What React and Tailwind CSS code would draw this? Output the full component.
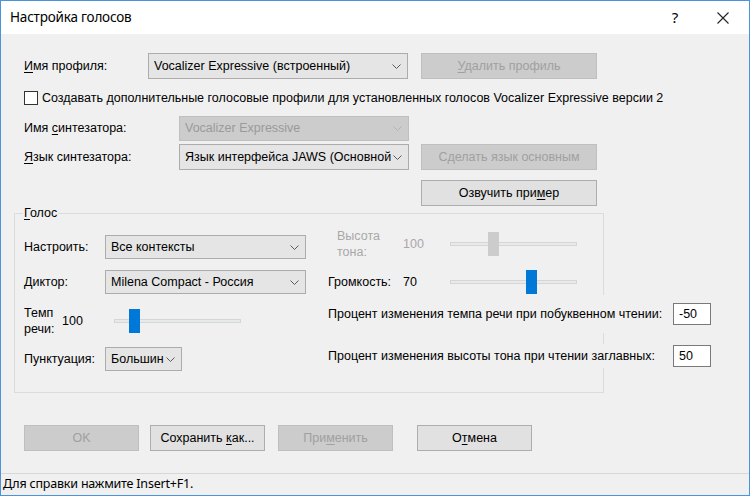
import React from 'react';

// Windows dialog "Настройка голосов" recreated with plain flex layout

const Chevron = ({ disabled }) => (
  <svg width="9" height="5" viewBox="0 0 9 5" className="shrink-0">
    <polyline
      points="0.5,0.5 4.5,4.5 8.5,0.5"
      fill="none"
      stroke={disabled ? '#b4b4b4' : '#5a5a5a'}
      strokeWidth="1"
    />
  </svg>
);

const Combo = ({ text, w, h = 'h-[25px]', disabled }) => (
  <div
    className={`${w} ${h} shrink-0 flex items-center border pl-[5px] pr-[6px] ${
      disabled
        ? 'bg-[#cccccc] border-[#bfbfbf] text-[#9a9a9a]'
        : 'bg-[#e5e5e5] border-[#acacac] text-black'
    }`}
  >
    <span className="flex-1 overflow-hidden whitespace-nowrap">{text}</span>
    <span className="pl-[2px] flex items-center">
      <Chevron disabled={disabled} />
    </span>
  </div>
);

const Button = ({ children, w = 'w-[176px]', disabled }) => (
  <div
    className={`${w} h-[26px] shrink-0 flex items-center justify-center border ${
      disabled
        ? 'bg-[#cccccc] border-[#bfbfbf] text-[#a0a0a0]'
        : 'bg-[#e1e1e1] border-[#adadad] text-black'
    }`}
  >
    <span className="whitespace-pre">{children}</span>
  </div>
);

const Slider = ({ pos, disabled }) => (
  <div className="relative w-[127px] h-[24px] flex items-center">
    <div className="w-full h-[4px] bg-[#e7eaea] border border-[#d6d6d6]" />
    <div
      className={`absolute top-0 w-[11px] h-[24px] ${disabled ? 'bg-[#cccccc]' : 'bg-[#0078d7]'}`}
      style={{ left: pos }}
    />
  </div>
);

const U = ({ children }) => (
  <span className="underline decoration-1 underline-offset-[2px]">{children}</span>
);

export default function App() {
  return (
    <div className="w-[750px] h-[496px] border border-[#4b93dc] bg-[#f0f0f0] flex flex-col overflow-hidden font-['Liberation_Sans',Arial,sans-serif] text-[12.5px] text-black">
      {/* Title bar */}
      <div className="h-[33px] shrink-0 bg-white flex items-center pl-[9px] font-['Noto_Sans',sans-serif]">
        <span className="text-[13.5px] tracking-[-0.2px] flex-1">Настройка голосов</span>
        <span className="text-[15px] w-[20px] text-center mr-[32px]">?</span>
        <span className="mr-[20px] flex items-center">
          <svg width="12" height="12" viewBox="0 0 12 12">
            <path d="M0.5 0.5 L11.5 11.5 M11.5 0.5 L0.5 11.5" stroke="#222" strokeWidth="1.1" />
          </svg>
        </span>
      </div>

      {/* Body */}
      <div className="h-[439px] shrink-0 pl-[23px] flex flex-col">
        <div className="mt-[19px] h-[26px] flex items-center">
          <span className="w-[124px]"><U>И</U>мя профиля:</span>
          <Combo text="Vocalizer Expressive (встроенный)" w="w-[260px]" h="h-[26px]" />
          <span className="ml-[13px]">
            <Button disabled><U>У</U>далить профиль</Button>
          </span>
        </div>

        <div className="mt-[12px] h-[14px] flex items-center">
          <div className="w-[14px] h-[14px] bg-white border border-[#333]" />
          <span className="ml-[4px] whitespace-nowrap">
            Создавать дополнительные голосовые профили для установленных голосов Vocalizer Expressive версии 2
          </span>
        </div>

        <div className="mt-[11px] h-[25px] flex items-center">
          <span className="w-[155px]">Имя <U>с</U>интезатора:</span>
          <Combo text="Vocalizer Expressive" w="w-[230px]" disabled />
        </div>

        <div className="mt-[3px] h-[26px] flex items-center">
          <span className="w-[155px]"><U>Я</U>зык синтезатора:</span>
          <Combo text="Язык интерфейса JAWS (Основной)" w="w-[230px]" h="h-[26px]" />
          <span className="ml-[12px]">
            <Button disabled>Сделать язык основным</Button>
          </span>
        </div>

        <div className="mt-[10px] h-[26px] flex items-center pl-[397px]">
          <Button>Озвучить при<U>м</U>ер</Button>
        </div>

        {/* Group box */}
        <div className="mt-[7px] -ml-[10px] w-[590px] h-[180px] border border-[#dcdcdc] relative pl-[9px] flex">
          <span className="absolute -top-[9px] left-[8px] px-[1px] bg-[#f0f0f0] leading-[16px]">
            <U>Г</U>олос
          </span>

          {/* Left column */}
          <div className="w-[304px] shrink-0 flex flex-col">
            <div className="mt-[21px] h-[24px] flex items-center">
              <span className="w-[81px]">Настроить:</span>
              <Combo text="Все контексты" w="w-[201px]" h="h-[24px]" />
            </div>
            <div className="mt-[11px] h-[24px] flex items-center">
              <span className="w-[81px]">Диктор:</span>
              <Combo text="Milena Compact - Россия" w="w-[201px]" h="h-[24px]" />
            </div>
            <div className="mt-[12px] h-[30px] flex items-center">
              <span className="w-[38px] leading-[16px]">Темп<br />речи:</span>
              <span className="w-[52px]">100</span>
              <Slider pos="15px" />
            </div>
            <div className="mt-[11px] h-[24px] flex items-center">
              <span className="w-[81px]">Пунктуация:</span>
              <Combo text="Большин" w="w-[77px]" h="h-[24px]" />
            </div>
          </div>

          {/* Right column */}
          <div className="shrink-0 flex flex-col">
            <div className="mt-[15px] h-[30px] flex items-center text-[#a8a8a8]">
              <span className="w-[75px] pl-[9px] leading-[16px]">Высота<br />тона:</span>
              <span className="w-[47px]">100</span>
              <Slider pos="38px" disabled />
            </div>
            <div className="mt-[11px] h-[24px] flex items-center">
              <span className="w-[75px]">Громкость:</span>
              <span className="w-[47px]">70</span>
              <Slider pos="76px" />
            </div>
            <div className="mt-[9px] h-[22px] flex items-center">
              <span className="w-[345px] h-[38px] flex items-center bg-[#f0f0f0] whitespace-nowrap">
                Процент изменения темпа речи при побуквенном чтении:
              </span>
              <div className="w-[38px] h-[22px] bg-white border border-[#7a7a7a] flex items-center pl-[5px]">-50</div>
            </div>
            <div className="mt-[20px] h-[22px] flex items-center">
              <span className="w-[345px] h-[24px] flex items-center bg-[#f0f0f0] whitespace-nowrap">
                Процент изменения высоты тона при чтении заглавных:
              </span>
              <div className="w-[38px] h-[22px] bg-white border border-[#7a7a7a] flex items-center pl-[5px]">50</div>
            </div>
          </div>
        </div>

        {/* Dialog buttons */}
        <div className="mt-[32px] h-[26px] flex items-center">
          <Button w="w-[115px]" disabled>OK</Button>
          <span className="ml-[11px]">
            <Button w="w-[115px]">Сохранить <U>к</U>ак...</Button>
          </span>
          <span className="ml-[13px]">
            <Button w="w-[115px]" disabled>При<U>м</U>енить</Button>
          </span>
          <span className="ml-[24px]">
            <Button w="w-[115px]">О<U>т</U>мена</Button>
          </span>
        </div>
      </div>

      {/* Status bar */}
      <div className="h-px shrink-0 bg-[#d7d7d7]" />
      <div className="flex-1 flex items-center pl-[2px] font-['Noto_Sans',sans-serif] text-[12.5px] tracking-[-0.2px]">
        Для справки нажмите Insert+F1.
      </div>
    </div>
  );
}
